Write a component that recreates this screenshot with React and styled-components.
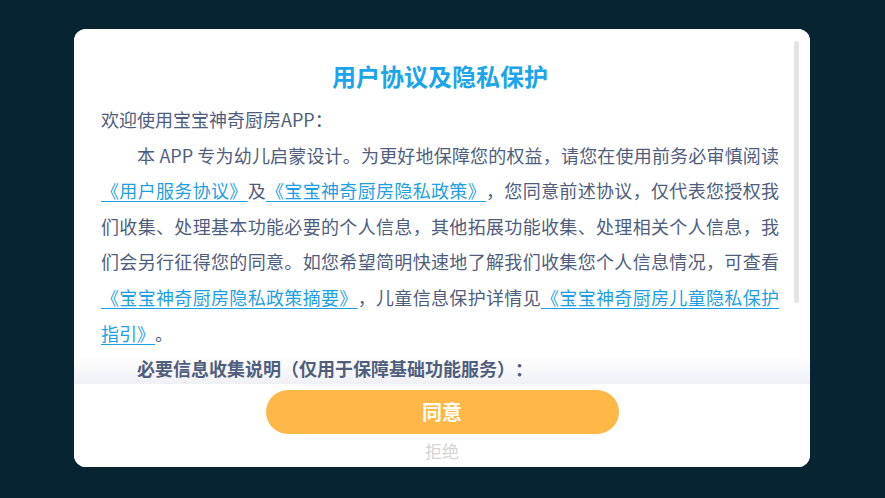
import styled, { createGlobalStyle } from "styled-components";

// 用户协议弹窗

const GlobalStyle = createGlobalStyle`
  html, body {
    margin: 0;
    padding: 0;
    background: #062431;
  }
  body {
    font-family: "Noto Sans CJK SC", "Noto Sans", sans-serif;
    text-spacing-trim: space-all;
  }
`;

const Page = styled.div`
  width: 885px;
  height: 498px;
  box-sizing: border-box;
  padding: 29px 0 0 74px;
  display: flex;
  flex-direction: column;
  align-items: flex-start;
  background: #062431;
`;

const Card = styled.div`
  position: relative;
  width: 736px;
  height: 438px;
  background: #ffffff;
  border-radius: 12px;
  overflow: hidden;
  display: flex;
  flex-direction: column;
`;

// 内容区，底部带一点渐变
const Scroll = styled.div`
  position: relative;
  flex: 1;
  overflow: hidden;
  padding: 29px 31px 0 27px;
  background: linear-gradient(to bottom, #ffffff calc(100% - 28px), #eff0f5);
`;

const Title = styled.h2`
  margin: 0 0 8px;
  font-size: 24px;
  line-height: 36px;
  font-weight: 700;
  color: #1ca5ea;
  text-align: center;
`;

const Para = styled.p`
  margin: 0;
  font-size: 18px;
  line-height: 35.6px;
  color: #505e7d;
  text-align: justify;
  text-spacing-trim: space-all;
  text-indent: ${(props) => (props.indent ? "2em" : "0")};
  font-weight: ${(props) => (props.bold ? 700 : 400)};
`;

const Link = styled.a`
  color: #1f9fe3;
  text-decoration: underline;
  text-decoration-thickness: 1px;
  text-underline-offset: 3px;
  cursor: pointer;
`;

const Thumb = styled.div`
  position: absolute;
  top: 12px;
  right: 11px;
  width: 5px;
  height: 262px;
  border-radius: 3px;
  background: #e4e4e4;
`;

const Footer = styled.div`
  height: 83px;
  flex-shrink: 0;
  box-sizing: border-box;
  padding-top: 6px;
  display: flex;
  flex-direction: column;
  align-items: center;
  background: #ffffff;
`;

const AgreeButton = styled.button`
  width: 353px;
  height: 44px;
  padding: 0;
  border: none;
  border-radius: 22px;
  background: #ffb848;
  color: #ffffff;
  font-family: inherit;
  font-size: 20px;
  line-height: 44px;
  font-weight: 700;
  cursor: pointer;
`;

const RejectButton = styled.button`
  margin-top: 7px;
  padding: 0;
  border: none;
  background: none;
  color: #d4d4d4;
  font-family: inherit;
  font-size: 17px;
  line-height: 20px;
  cursor: pointer;
`;

function App() {
  return (
    <>
      <GlobalStyle />
      <Page>
        <Card>
          <Scroll>
            <Title>用户协议及隐私保护</Title>
            <Para>欢迎使用宝宝神奇厨房APP：</Para>
            <Para indent>
              本 APP 专为幼儿启蒙设计。为更好地保障您的权益，请您在使用前务必审慎阅读
              <Link>《用户服务协议》</Link>及<Link>《宝宝神奇厨房隐私政策》</Link>
              ，您同意前述协议，仅代表您授权我们收集、处理基本功能必要的个人信息，其他拓展功能收集、处理相关个人信息，我们会另行征得您的同意。如您希望简明快速地了解我们收集您个人信息情况，可查看
              <Link>《宝宝神奇厨房隐私政策摘要》</Link>，儿童信息保护详情见
              <Link>《宝宝神奇厨房儿童隐私保护指引》</Link>。
            </Para>
            <Para indent bold>
              必要信息收集说明（仅用于保障基础功能服务）：
            </Para>
            <Para indent>
              设备信息：为保障 APP 正常运行，我们会收集您的设备型号、操作系统版本等信息。
            </Para>
            <Thumb />
          </Scroll>
          <Footer>
            <AgreeButton>同意</AgreeButton>
            <RejectButton>拒绝</RejectButton>
          </Footer>
        </Card>
      </Page>
    </>
  );
}

export default App;
